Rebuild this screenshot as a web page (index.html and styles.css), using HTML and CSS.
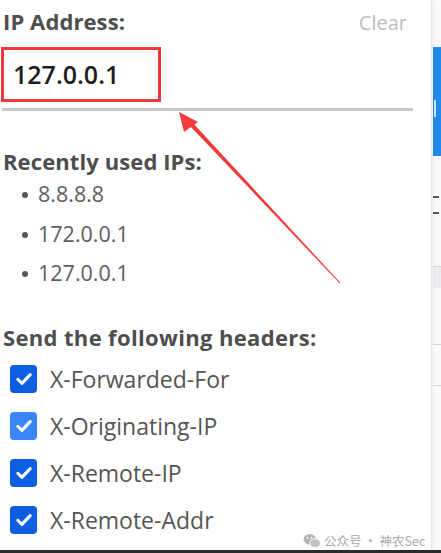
FILE: index.html
```html
<!DOCTYPE html>
<html>
<head>
<meta charset="utf-8">
<link rel="stylesheet" href="styles.css">
</head>
<body>
<div class="page">
  <div class="panel">
    <div class="head-row">
      <span class="heading">IP Address:</span>
      <span class="clear">Clear</span>
    </div>
    <div class="ip-input">127.0.0.1</div>
    <div class="divider"></div>
    <div class="heading recent">Recently used IPs:</div>
    <ul class="ip-list">
      <li>8.8.8.8</li>
      <li>172.0.0.1</li>
      <li>127.0.0.1</li>
    </ul>
    <div class="heading headers">Send the following headers:</div>
    <div class="checks">
      <label class="check"><span class="box"><svg viewBox="0 0 16 16"><path d="M3.5 8.2l3 3 6-6.4" /></svg></span>X-Forwarded-For</label>
      <label class="check"><span class="box hover"><svg viewBox="0 0 16 16"><path d="M3.5 8.2l3 3 6-6.4" /></svg></span>X-Originating-IP</label>
      <label class="check"><span class="box"><svg viewBox="0 0 16 16"><path d="M3.5 8.2l3 3 6-6.4" /></svg></span>X-Remote-IP</label>
      <label class="check"><span class="box"><svg viewBox="0 0 16 16"><path d="M3.5 8.2l3 3 6-6.4" /></svg></span>X-Remote-Addr</label>
    </div>
  </div>
  <div class="side">
    <div class="side-blue"><span class="side-blue-mark"></span></div>
    <div class="side-mark"></div>
    <div class="side-gray"></div>
    <div class="side-line l1"></div>
    <div class="side-line l2"></div>
  </div>
  <svg class="arrow" width="441" height="553" viewBox="0 0 441 553">
    <polygon points="340.4,282.7 339.6,283.3 187.6,123.4 190.6,120.6" fill="#f23a3a" />
    <polygon points="179,112 198,122 184,132" fill="#f23a3a" />
  </svg>
  <div class="watermark">
    <svg class="wx" viewBox="0 0 20 18"><ellipse cx="7.5" cy="7" rx="7" ry="6" fill="#b5b5b5"/><ellipse cx="13.5" cy="11.5" rx="6" ry="5" fill="#c2c2c2" stroke="#fff" stroke-width="1"/><circle cx="5" cy="5.5" r="1" fill="#fff"/><circle cx="9.5" cy="5.5" r="1" fill="#fff"/></svg>
    <span>公众号 · 神农Sec</span>
  </div>
</div>
</body>
</html>
```
FILE: styles.css
```css
html, body {
  margin: 0;
  padding: 0;
  background: #fff;
}
.page {
  position: relative;
  width: 441px;
  height: 553px;
  display: flex;
  overflow: hidden;
  border-bottom: 3px solid #2a2a2a;
  box-sizing: border-box;
  font-family: "Open Sans", "Noto Sans", sans-serif;
}
.panel {
  width: 432px;
  box-sizing: border-box;
  padding: 5px 24px 0 3px;
  border-right: 1px solid #e6e6e6;
  box-shadow: 1px 0 3px rgba(0,0,0,0.06);
  background: #fff;
  position: relative;
  z-index: 1;
}
.head-row {
  display: flex;
  justify-content: space-between;
  align-items: baseline;
  height: 32px;
  line-height: 32px;
}
.heading {
  font-weight: 700;
  font-size: 22px;
  color: #4e4e4e;
  letter-spacing: 0.1px;
}
.clear {
  font-size: 20px;
  color: #bdbdbd;
}
.ip-input {
  margin-top: 10px;
  margin-left: -2px;
  width: 160px;
  height: 55px;
  box-sizing: border-box;
  border: 3px solid #f03a3a;
  padding: 0 0 0 9px;
  line-height: 48px;
  font-size: 25px;
  font-weight: 600;
  color: #1e1e1e;
}
.divider {
  margin: 6px 0 0 -1px;
  height: 3px;
  width: 411px;
  background: #c9c9c9;
}
.recent {
  margin-top: 36px;
  line-height: 28px;
}
.ip-list {
  margin: 2px 0 0 0;
  padding: 0 0 0 35px;
  list-style: none;
}
.ip-list li {
  position: relative;
  height: 39.5px;
  line-height: 34px;
  font-size: 21.5px;
  color: #5e5e5e;
}
.ip-list li::before {
  content: "";
  position: absolute;
  left: -16px;
  top: 15px;
  width: 6px;
  height: 6px;
  border-radius: 50%;
  background: #555;
}
.headers {
  margin-top: 27px;
  line-height: 28px;
  letter-spacing: 0.35px;
}
.checks {
  display: flex;
  flex-direction: column;
  gap: 19px;
  margin-top: 14px;
  padding-left: 7px;
}
.check {
  display: flex;
  align-items: center;
  height: 28px;
  gap: 13px;
  font-size: 23px;
  color: #555;
}
.box {
  width: 27px;
  height: 28px;
  border-radius: 4px;
  background: #0b5fe0;
  display: flex;
  align-items: center;
  justify-content: center;
}
.box.hover {
  background: #3a86f7;
}
.box svg {
  width: 22px;
  height: 22px;
  fill: none;
  stroke: #fff;
  stroke-width: 2.2;
  stroke-linecap: round;
  stroke-linejoin: round;
}
.side {
  width: 9px;
  position: relative;
  background: #fafafa;
}
.side-blue {
  position: absolute;
  left: 1px;
  top: 47px;
  width: 8px;
  height: 109px;
  background: #2289ee;
}
.side-blue-mark {
  position: absolute;
  left: 1px;
  top: 53px;
  width: 2px;
  height: 17px;
  background: #cfe4fb;
}
.side-mark {
  position: absolute;
  left: 1px;
  top: 196px;
  width: 6px;
  height: 18px;
  border-top: 2px solid #555;
  border-bottom: 2px solid #555;
  box-sizing: border-box;
}
.side-gray {
  position: absolute;
  left: 1px;
  top: 266px;
  width: 8px;
  height: 21px;
  background: #ececf0;
  border-top: 1px solid #d8d8d8;
}
.side-line {
  position: absolute;
  left: 1px;
  width: 8px;
  height: 1px;
  background: #d8d8d8;
}
.side-line.l1 { top: 344px; }
.side-line.l2 { top: 385px; }
.arrow {
  position: absolute;
  left: 0;
  top: 0;
  z-index: 3;
  pointer-events: none;
}
.watermark {
  position: absolute;
  left: 303px;
  top: 533px;
  z-index: 4;
  display: flex;
  align-items: center;
  gap: 3px;
  font-family: "Noto Sans CJK SC", sans-serif;
  font-size: 12.5px;
  color: #a8a8a8;
  line-height: 16px;
  white-space: nowrap;
}
.wx {
  width: 18px;
  height: 16px;
}
```
